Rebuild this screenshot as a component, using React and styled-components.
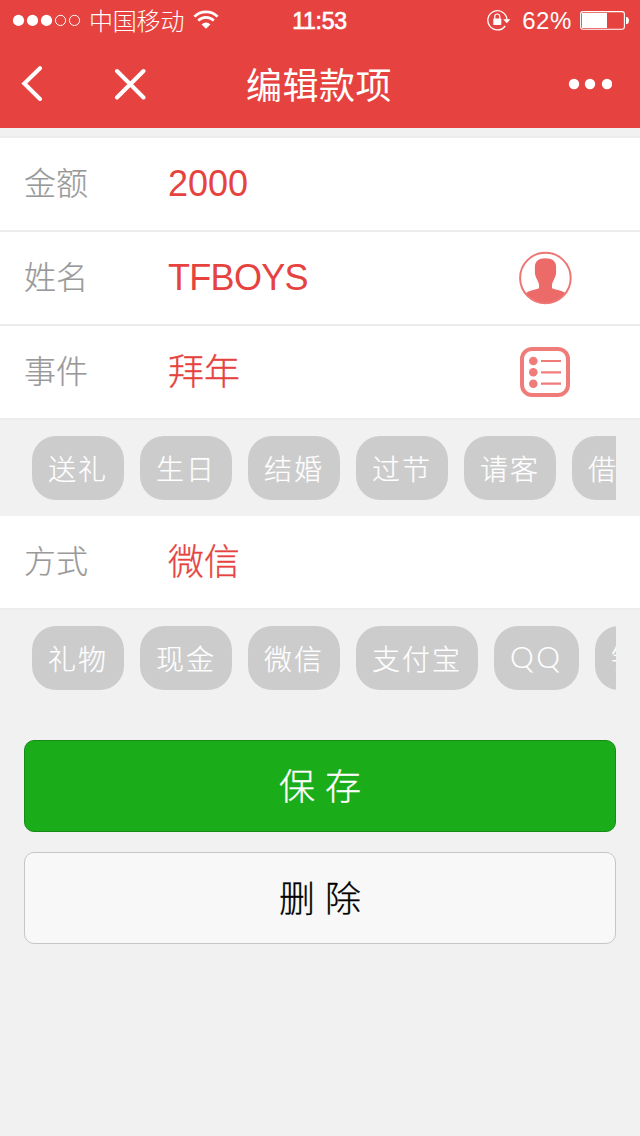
import React from 'react';
import styled, { createGlobalStyle } from 'styled-components';

const colors = {
  red: '#e64340',
  page: '#f1f1f1',
  line: '#ededed',
  label: '#999',
  chip: '#ccc',
};

const events = ['送礼', '生日', '结婚', '过节', '请客', '借钱'];
const methods = ['礼物', '现金', '微信', '支付宝', 'QQ', '银行卡'];

const StatusBar = () => (
  <Status>
    <Carrier>
      <svg width="70" height="14" viewBox="0 0 70 14">
        <g fill="#fff">
          <circle cx="6.5" cy="7.4" r="5.6" />
          <circle cx="20.5" cy="7.4" r="5.6" />
          <circle cx="34.5" cy="7.4" r="5.6" />
        </g>
        <g fill="none" stroke="#fff">
          <circle cx="48.5" cy="7.4" r="5.1" />
          <circle cx="62.5" cy="7.4" r="5.1" />
        </g>
      </svg>
      <CarrierName>中国移动</CarrierName>
      <svg width="26" height="20" viewBox="0 0 26 20">
        <g fill="none" stroke="#fff" strokeWidth="2.7">
          <path d="M1.4 6.6a16.4 16.4 0 0 1 23.2 0" />
          <path d="M5.2 10.6a11 11 0 0 1 15.6 0" />
        </g>
        <path d="M8.6 14.4a6.2 6.2 0 0 1 8.8 0L13 18.8z" fill="#fff" />
      </svg>
    </Carrier>
    <Time>11:53</Time>
    <Power>
      <svg width="24" height="22" viewBox="0 0 24 22">
        <path d="M18.2 17A9.6 9.6 0 1 1 20 10.5" fill="none" stroke="#fff" strokeWidth="1.3" />
        <path d="M16.2 10.2h7.2l-3.6 4z" fill="#fff" />
        <rect x="6.3" y="9.6" width="8" height="6.3" rx=".6" fill="#fff" />
        <path d="M7.8 10V7.500a2.500 2.500 0 0 1 5 0V10" fill="none" stroke="#fff" strokeWidth="1.2" />
      </svg>
      <Percent>62%</Percent>
      <svg width="50" height="20" viewBox="0 0 50 20">
        <rect x=".6" y="1.6" width="43.8" height="17.6" rx="2.4" fill="none" stroke="#fff" strokeWidth="1.1" />
        <rect x="2" y="3" width="25" height="15" fill="#fff" />
        <path d="M46 7h1.2q1.8 1 1.8 3.5T47.2 14H46z" fill="#fff" />
      </svg>
    </Power>
  </Status>
);

const NavBar = () => (
  <Nav>
    <NavLeft>
      <svg width="24" height="36" viewBox="0 0 24 36">
        <path d="M20 2.2L4.3 17.5 20 33" fill="none" stroke="#fff" strokeWidth="4" strokeLinecap="round" />
      </svg>
      <svg width="32" height="32" viewBox="0 0 32 32">
        <path d="M3 3l26.5 26.5M29.5 3L3 29.5" fill="none" stroke="#fff" strokeWidth="4" strokeLinecap="round" />
      </svg>
    </NavLeft>
    <Title>编辑款项</Title>
    <NavRight>
      <svg width="44" height="12" viewBox="0 0 44 12">
        <g fill="#fff">
          <circle cx="6" cy="6" r="5.2" />
          <circle cx="22" cy="6" r="5.2" />
          <circle cx="39" cy="6" r="5.2" />
        </g>
      </svg>
    </NavRight>
  </Nav>
);

const PersonIcon = () => (
  <svg width="54" height="54" viewBox="0 0 54 54">
    <clipPath id="avatar">
      <circle cx="27.4" cy="27" r="25.5" />
    </clipPath>
    <path
      clipPath="url(#avatar)"
      d="M27.500 7.300c7 0 10.700 3 10.600 9.200-.1 2 .2 4.500-.2 7-.4 2.300-1.500 3.800-2.200 5.500-.9 2.200-1.600 3-1.700 5v3.200c3.500 1.300 8.500 2 12.700 4.300V54H8.500V41.500c4.200-2.300 9-3 12.500-4.300V34c-.1-2-.8-2.800-1.700-5-.7-1.700-1.800-3.200-2.200-5.500-.4-2.500-.1-5-.2-7C16.800 10.300 20.500 7.300 27.500 7.300z"
      fill="#ec6b69"
    />
    <circle cx="27.4" cy="27" r="25.3" fill="none" stroke="#ee7674" strokeWidth="2" />
  </svg>
);

const ListIcon = () => (
  <svg width="54" height="54" viewBox="0 0 54 54">
    <rect x="4" y="4" width="46" height="46" rx="10" fill="none" stroke="#f07c7a" strokeWidth="4" />
    <g fill="#f07c7a">
      <circle cx="15.3" cy="16" r="4.3" />
      <circle cx="15.3" cy="27.3" r="4.3" />
      <circle cx="15.3" cy="38.7" r="4.3" />
    </g>
    <path d="M23 16h20M23 27.3h20M23 38.7h20" stroke="#f07c7a" strokeWidth="2.2" />
  </svg>
);

const Field = ({ label, value, icon, latin, spacing }) => (
  <Row>
    <Label>{label}</Label>
    <Value $latin={latin} $spacing={spacing}>
      {value}
    </Value>
    {icon}
  </Row>
);

const Chips = ({ items }) => (
  <ChipArea>
    <ChipScroll>
      {items.map((item) =>
        item === 'QQ' ? <LatinChip key={item}>{item}</LatinChip> : <Chip key={item}>{item}</Chip>
      )}
    </ChipScroll>
  </ChipArea>
);

export default function App() {
  return (
    <>
      <GlobalStyle />
      <Page>
        <Header>
          <StatusBar />
          <NavBar />
        </Header>
        <Spacer />
        <Field label="金额" value="2000" latin />
        <Field label="姓名" value="TFBOYS" latin spacing="-0.7px" icon={<PersonIcon />} />
        <Field label="事件" value="拜年" icon={<ListIcon />} />
        <Chips items={events} />
        <Field label="方式" value="微信" />
        <Chips items={methods} />
        <Actions>
          <Button $primary>保 存</Button>
          <Button>删 除</Button>
        </Actions>
      </Page>
    </>
  );
}

const GlobalStyle = createGlobalStyle`
  * {
    box-sizing: border-box;
  }

  body {
    margin: 0;
    background: ${colors.page};
    font-family: 'Liberation Sans', 'Noto Sans CJK SC', sans-serif;
    font-weight: 300;
  }

  svg {
    display: block;
    flex-shrink: 0;
  }
`;

const Page = styled.div`
  width: 640px;
  height: 1136px;
  overflow: hidden;
  background: ${colors.page};
`;

const Header = styled.header`
  height: 128px;
  background: ${colors.red};
  color: #fff;
`;

const Status = styled.div`
  display: grid;
  grid-template-columns: 1fr auto 1fr;
  align-items: center;
  height: 40px;
  padding: 0 10px 0 12px;
  font-size: 24px;
  line-height: 36px;
`;

const Carrier = styled.div`
  display: flex;
  align-items: center;
`;

const CarrierName = styled.span`
  margin: 0 9px 0 7px;
  padding-top: 3px;
  letter-spacing: -0.2px;
`;

const Time = styled.span`
  padding: 2px 3px 0 0;
  font-size: 23px;
  letter-spacing: -0.3px;
  -webkit-text-stroke: 0.7px #fff;
`;

const Power = styled.div`
  display: flex;
  align-items: center;
  justify-content: flex-end;
`;

const Percent = styled.span`
  margin: 0 8px 0 11px;
  padding-top: 2px;
  letter-spacing: 0.6px;
`;

const Nav = styled.div`
  display: grid;
  grid-template-columns: 1fr auto 1fr;
  align-items: center;
  height: 88px;
  padding: 0 28px 0 20px;
`;

const NavLeft = styled.div`
  display: flex;
  align-items: center;
  gap: 70px;
`;

const NavRight = styled.div`
  display: flex;
  justify-content: flex-end;
`;

const Title = styled.h1`
  margin: 0;
  padding: 6px 0 0 6px;
  font-size: 36px;
  font-weight: 400;
  line-height: 82px;
  letter-spacing: 0.5px;
`;

const Spacer = styled.div`
  height: 10px;
  border-bottom: 2px solid ${colors.line};
`;

const Row = styled.div`
  display: flex;
  align-items: center;
  height: 94px;
  padding: 0 68px 0 24px;
  background: #fff;
  border-bottom: 2px solid ${colors.line};
`;

const Label = styled.span`
  width: 144px;
  color: ${colors.label};
  font-size: 32px;
  line-height: 90px;
  -webkit-text-stroke: 0.2px ${colors.label};
`;

const Value = styled.span`
  flex: 1;
  padding-top: ${({ $latin }) => ($latin ? '0' : '2px')};
  color: ${colors.red};
  font-size: 36px;
  line-height: 88px;
  letter-spacing: ${({ $spacing }) => $spacing || '0'};
  -webkit-text-stroke: ${({ $latin }) => ($latin ? '0' : '0.3px')} ${colors.red};
`;

const ChipArea = styled.div`
  height: 96px;
  padding: 16px 24px;
`;

const ChipScroll = styled.div`
  display: flex;
  gap: 16px;
  padding-left: 8px;
  overflow: hidden;
`;

const Chip = styled.span`
  flex-shrink: 0;
  height: 64px;
  padding: 0 16px;
  border-radius: 24px;
  background: ${colors.chip};
  color: #fff;
  font-family: 'Noto Sans CJK SC', sans-serif;
  font-size: 28px;
  line-height: 64px;
  letter-spacing: 2px;
  white-space: nowrap;
  -webkit-text-stroke: 0.2px #fff;
`;

const LatinChip = styled(Chip)`
  width: 85px;
  font-family: Lato, sans-serif;
  font-size: 30px;
  line-height: 60px;
  letter-spacing: 2.4px;
`;

const Actions = styled.div`
  display: flex;
  flex-direction: column;
  gap: 20px;
  padding: 34px 24px;
`;

const Button = styled.button`
  height: 92px;
  padding: 3px 0 0;
  border: 1px solid ${({ $primary }) => ($primary ? '#178b17' : '#c6c6c6')};
  border-radius: 10px;
  background: ${({ $primary }) => ($primary ? '#1aad19' : '#f8f8f8')};
  color: ${({ $primary }) => ($primary ? '#fff' : '#000')};
  font-family: inherit;
  font-size: 36px;
  font-weight: 300;
  line-height: 86px;
  -webkit-text-stroke: 0.3px ${({ $primary }) => ($primary ? '#fff' : '#000')};
`;
